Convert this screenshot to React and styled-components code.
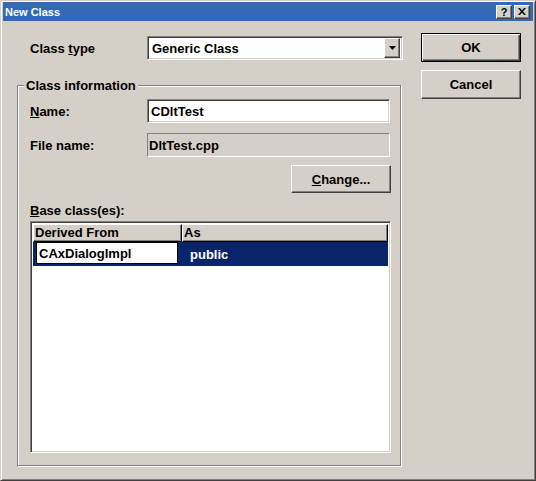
import React from 'react';
import styled, { createGlobalStyle, css } from 'styled-components';

const GlobalStyle = createGlobalStyle`
  html, body { margin: 0; padding: 0; background: #d4d0c8; }
  body { font-family: "Liberation Sans", Arial, sans-serif; }
`

const raised = css`
  border: 1px solid;
  border-color: #fff #404040 #404040 #fff;
  box-shadow: inset -1px -1px 0 #808080, inset 1px 1px 0 #d4d0c8;
  background: #d4d0c8;
`

const sunken = css`
  border: 1px solid;
  border-color: #808080 #fff #fff #808080;
  box-shadow: inset 1px 1px 0 #404040, inset -1px -1px 0 #d4d0c8;
`

const Window = styled.div`
  width: 536px;
  height: 481px;
  box-sizing: border-box;
  border: 1px solid;
  border-color: #d4d0c8 #404040 #404040 #d4d0c8;
  box-shadow: inset 1px 1px 0 #fff, inset -1px -1px 0 #808080;
  padding: 2px 2px;
  display: flex;
  flex-direction: column;
  background: #d4d0c8;
  font-size: 13px;
  font-weight: bold;
  color: #000;
`

const TitleBar = styled.div`
  height: 19px;
  margin-top: -1px;
  background: #3369b7;
  display: flex;
  align-items: center;
  justify-content: space-between;
  padding: 0 3px 0 2px;
  color: #fff;
  font-size: 11px;
`

const TitleButtons = styled.div`
  display: flex;
  gap: 2px;
`

const TitleButton = styled.div`
  ${raised}
  width: 16px;
  height: 14px;
  box-sizing: border-box;
  display: flex;
  align-items: center;
  justify-content: center;
  color: #000;
  font-size: 11px;
  font-weight: bold;
`

const Main = styled.div`
  flex: 1;
  display: flex;
  gap: 18px;
  padding: 12px 12px 0 14px;
`

const LeftColumn = styled.div`
  width: 386px;
  display: flex;
  flex-direction: column;
`

const RightColumn = styled.div`
  width: 100px;
  display: flex;
  flex-direction: column;
  gap: 8px;
`

const Row = styled.div`
  display: flex;
  align-items: center;
  height: ${p => p.$h || 24}px;
  margin-top: ${p => p.$mt || 0}px;
  justify-content: ${p => p.$end ? 'flex-end' : 'flex-start'};
`

const Label = styled.div`
  width: ${p => p.$w}px;
  padding-left: ${p => p.$pl || 0}px;
  box-sizing: border-box;
  u { text-decoration: underline; }
`

const Combo = styled.div`
  ${sunken}
  background: #fff;
  width: 256px;
  height: 24px;
  box-sizing: border-box;
  display: flex;
  align-items: center;
  padding: 2px 2px 2px 4px;
`

const ComboText = styled.span`
  flex: 1;
`

const ComboArrow = styled.div`
  ${raised}
  width: 16px;
  height: 20px;
  box-sizing: border-box;
  display: flex;
  align-items: center;
  justify-content: center;
`

const Edit = styled.div`
  ${sunken}
  background: ${p => p.$readonly ? '#d4d0c8' : '#fff'};
  ${p => p.$readonly && css`box-shadow: none;`}
  width: 243px;
  height: ${p => p.$h || 24}px;
  box-sizing: border-box;
  display: flex;
  align-items: center;
  padding-left: ${p => p.$readonly ? 1 : 3}px;
`

const Button = styled.div`
  ${raised}
  ${p => p.$default && css`
    border: 1px solid #000;
    box-shadow: inset 1px 1px 0 #fff, inset -1px -1px 0 #404040, inset -2px -2px 0 #808080;
  `}
  width: ${p => p.$w || 100}px;
  height: ${p => p.$h || 29}px;
  box-sizing: border-box;
  display: flex;
  align-items: center;
  justify-content: center;
`

const GroupBox = styled.div`
  position: relative;
  width: 384px;
  height: 381px;
  margin-top: 25px;
  box-sizing: border-box;
  border: 1px solid #808080;
  box-shadow: inset 1px 1px 0 #fff, 1px 1px 0 #fff;
  padding: 13px 9px 12px 12px;
  display: flex;
  flex-direction: column;
`

const Legend = styled.div`
  position: absolute;
  top: -8px;
  left: 6px;
  padding: 0 2px;
  background: #d4d0c8;
  line-height: 15px;
`

const BaseLabel = styled.div`
  margin-top: 10px;
  height: 15px;
  line-height: 15px;
`

const List = styled.div`
  ${sunken}
  margin-top: 3px;
  flex: 1;
  background: #fff;
  padding: 2px;
  display: flex;
  flex-direction: column;
`

const HeaderRow = styled.div`
  display: flex;
  height: 18px;
`

const HeaderCell = styled.div`
  border: 1px solid;
  border-color: #fff #000 #000 #fff;
  box-shadow: inset -1px -1px 0 #808080;
  background: #d4d0c8;
  width: ${p => p.$w ? `${p.$w}px` : 'auto'};
  flex: ${p => p.$w ? 'none' : 1};
  box-sizing: border-box;
  padding-left: 1px;
  line-height: 16px;
`

const ListRow = styled.div`
  position: relative;
  display: flex;
  height: 24px;
  align-items: center;
  background: ${p => p.$selected ? '#0a246a' : 'transparent'};
  color: ${p => p.$selected ? '#fff' : '#000'};
`

const Cell = styled.div`
  width: ${p => p.$w ? `${p.$w}px` : 'auto'};
  flex: ${p => p.$w ? 'none' : 1};
  padding-left: ${p => p.$pl || 0}px;
  box-sizing: border-box;
`

const InPlaceEdit = styled.div`
  position: absolute;
  left: 3px;
  top: 0;
  width: 142px;
  height: 22px;
  box-sizing: border-box;
  border: 1px solid #000;
  background: #fff;
  color: #000;
  padding-left: 2px;
  display: flex;
  align-items: center;
`

export default function App() {
  return (
    <>
      <GlobalStyle />
      <Window>
        <TitleBar>
          <span>New Class</span>
          <TitleButtons>
            <TitleButton>?</TitleButton>
            <TitleButton>
              <svg width="8" height="7" viewBox="0 0 8 7">
                <path d="M0 0h2l2 2.5L6 0h2L5 3.5 8 7H6L4 4.5 2 7H0l3-3.5z" fill="#000" />
              </svg>
            </TitleButton>
          </TitleButtons>
        </TitleBar>
        <Main>
          <LeftColumn>
            <Row $mt={3}>
              <Label $w={130} $pl={13}>Class <u>t</u>ype</Label>
              <Combo>
                <ComboText>Generic Class</ComboText>
                <ComboArrow>
                  <svg width="7" height="4" viewBox="0 0 7 4">
                    <path d="M0 0h7L3.5 4z" fill="#000" />
                  </svg>
                </ComboArrow>
              </Combo>
            </Row>
            <GroupBox>
              <Legend>Class information</Legend>
              <Row>
                <Label $w={117}><u>N</u>ame:</Label>
                <Edit>CDltTest</Edit>
              </Row>
              <Row $mt={10}>
                <Label $w={117}>File name:</Label>
                <Edit $readonly>DltTest.cpp</Edit>
              </Row>
              <Row $mt={8} $h={28} $end>
                <Button $h={28}><u>C</u>hange...</Button>
              </Row>
              <BaseLabel><u>B</u>ase class(es):</BaseLabel>
              <List>
                <HeaderRow>
                  <HeaderCell $w={149}>Derived From</HeaderCell>
                  <HeaderCell>As</HeaderCell>
                </HeaderRow>
                <ListRow $selected>
                  <Cell $w={149} />
                  <Cell $pl={8}>public</Cell>
                  <InPlaceEdit>CAxDialogImpl</InPlaceEdit>
                </ListRow>
              </List>
            </GroupBox>
          </LeftColumn>
          <RightColumn>
            <Button $default>OK</Button>
            <Button>Cancel</Button>
          </RightColumn>
        </Main>
      </Window>
    </>
  );
}
